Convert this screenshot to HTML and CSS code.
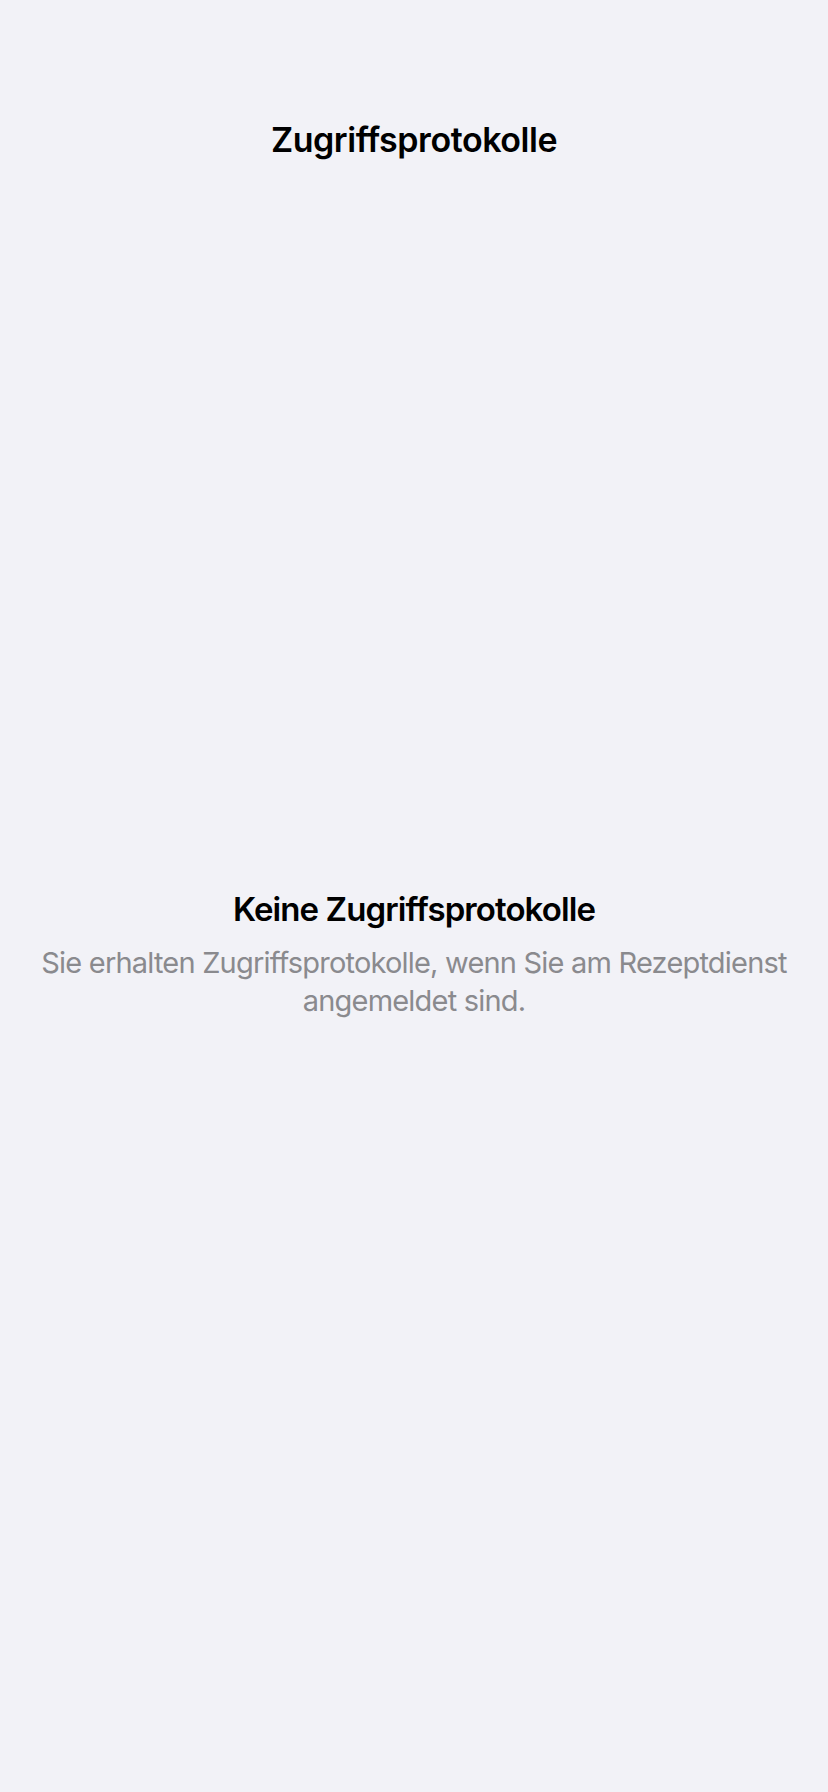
FILE: index.html
```html
<!DOCTYPE html>
<html lang="de">
<head>
<meta charset="utf-8">
<title>Zugriffsprotokolle</title>
<link rel="stylesheet" href="styles.css">
</head>
<body>
<div class="screen">
  <header class="navbar">
    <h1 class="nav-title">Zugriffsprotokolle</h1>
  </header>
  <main class="empty">
    <h2 class="empty-title">Keine Zugriffsprotokolle</h2>
    <p class="empty-text">Sie erhalten Zugriffsprotokolle, wenn Sie am Rezeptdienst angemeldet sind.</p>
  </main>
</div>
</body>
</html>
```
FILE: styles.css
```css
html, body {
  margin: 0;
  padding: 0;
  background: #F2F2F7;
}
body {
  font-family: Inter, "Noto Sans", "Liberation Sans", sans-serif;
  color: #000;
}
.screen {
  width: 828px;
  height: 1792px;
  display: flex;
  flex-direction: column;
  background: #F2F2F7;
}
.navbar {
  padding-top: 120px;
  display: flex;
  justify-content: center;
}
.nav-title {
  margin: 0;
  font-size: 34px;
  line-height: 40px;
  font-weight: 600;
  letter-spacing: -0.45px;
}
.empty {
  padding: 729px 30px 0;
  display: flex;
  flex-direction: column;
  align-items: center;
  gap: 15px;
  text-align: center;
}
.empty-title {
  margin: 0;
  font-size: 33px;
  line-height: 40px;
  font-weight: 600;
  letter-spacing: -0.9px;
}
.empty-text {
  margin: 0;
  font-size: 29px;
  line-height: 38px;
  font-weight: 400;
  color: #8A8A8E;
  letter-spacing: -0.8px;
}
```
